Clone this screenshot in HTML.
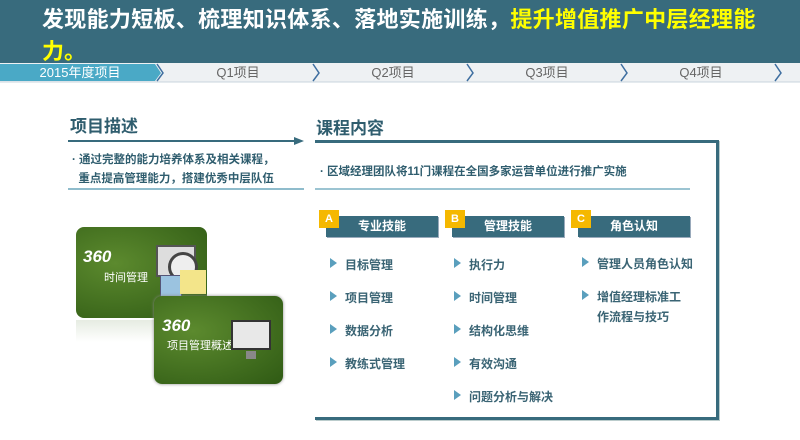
<!DOCTYPE html>
<html><head><meta charset="utf-8"><style>
*{margin:0;padding:0;box-sizing:border-box}
body{width:800px;height:440px;background:#fff;position:relative;overflow:hidden;font-family:"Liberation Sans","Noto Sans CJK SC",sans-serif}
.abs{position:absolute}
.hdr{left:0;top:0;width:800px;height:63px;background:#386b7d}
.t1{left:42px;top:2px;font-size:22px;font-weight:bold;color:#fff;white-space:nowrap;letter-spacing:0.3px}
.y{color:#ffff00}
.t2{left:42px;top:34px;font-size:22px;font-weight:bold;color:#ffff00}
.tl{top:63px;height:19px;font-size:13px;color:#666;text-align:center;line-height:19px}
.h{font-size:17px;font-weight:bold;color:#2f5d6e}
.bt{font-size:11.5px;font-weight:bold;color:#2f5d6e;line-height:19px;white-space:nowrap}
.bar{height:21px;background:#386b7d;color:#fff;font-size:12px;font-weight:bold;text-align:center;line-height:21px;width:112px;box-shadow:1px 1px 0 #9ab}
.badge{width:20px;height:18px;background:#f5b800;color:#fff;font-size:11px;font-weight:bold;text-align:center;line-height:18px}
.it{font-size:12px;font-weight:bold;color:#3a6474;white-space:nowrap;line-height:21px}
.tri:before{content:"";display:inline-block;width:0;height:0;border-left:7px solid #5a9fbd;border-top:5px solid transparent;border-bottom:5px solid transparent;margin-right:8px;vertical-align:1px}
.card{border-radius:8px;background:radial-gradient(ellipse at 30% 40%,#5c8a2e,#2f5a14);color:#fff;overflow:hidden}
.card .n{position:absolute;font-size:17px;font-weight:bold;font-style:italic}
.card .s{position:absolute;font-size:11px}
</style></head><body>
<div class="abs hdr"></div>
<div class="abs t1">发现能力短板、梳理知识体系、落地实施训练，<span class="y">提升增值推广中层经理能</span></div>
<div class="abs t2">力。</div>
<svg class="abs" style="left:0;top:63px" width="800" height="20">
<rect x="0" y="0" width="800" height="19" fill="#eef1f3"/>
<polygon points="0,1 155,1 161,10 155,18 0,18" fill="#4aa9c6"/>
<g fill="none" stroke="#3f6fa0" stroke-width="1.5">
<polyline points="157,1 163,10 157,18"/><polyline points="313,1 319,10 313,18"/><polyline points="467,1 473,10 467,18"/><polyline points="621,1 627,10 621,18"/><polyline points="775,1 781,10 775,18"/>
</g>
<line x1="0" y1="19" x2="800" y2="19" stroke="#c8d4dc"/>
</svg>
<div class="abs tl" style="left:0;width:160px;color:#fff">2015年度项目</div>
<div class="abs tl" style="left:160px;width:156px">Q1项目</div>
<div class="abs tl" style="left:316px;width:154px">Q2项目</div>
<div class="abs tl" style="left:470px;width:154px">Q3项目</div>
<div class="abs tl" style="left:624px;width:154px">Q4项目</div>

<div class="abs h" style="left:70px;top:112px">项目描述</div>
<svg class="abs" style="left:68px;top:136px" width="240" height="10"><line x1="0" y1="5" x2="228" y2="5" stroke="#386b7d" stroke-width="2"/><polygon points="226,1 236,5 226,9" fill="#386b7d"/></svg>
<div class="abs bt" style="left:72px;top:151px">· 通过完整的能力培养体系及相关课程，<br>&nbsp;&nbsp;重点提高管理能力，搭建优秀中层队伍</div>
<div class="abs" style="left:68px;top:188px;width:236px;height:2px;background:#8fbccc"></div>

<div class="abs card" style="left:76px;top:227px;width:131px;height:91px">
<div class="n" style="left:7px;top:20px">360</div><div class="s" style="left:28px;top:42px">时间管理</div>
<div class="abs" style="left:80px;top:18px;width:40px;height:32px;background:#ddd;border:2px solid #555"></div>
<div class="abs" style="left:92px;top:25px;width:30px;height:30px;border-radius:50%;background:#eee;border:3px solid #444"></div>
<div class="abs" style="left:84px;top:48px;width:22px;height:28px;background:#9bc3e0;border:1px solid #557"></div>
<div class="abs" style="left:104px;top:43px;width:26px;height:24px;background:#f3e58a"></div>
</div>
<div class="abs" style="left:76px;top:320px;width:131px;height:22px;background:linear-gradient(#e6ece2,#fff)"></div>
<div class="abs card" style="left:154px;top:296px;width:129px;height:88px;box-shadow:0 0 3px #888">
<div class="n" style="left:8px;top:20px">360</div><div class="s" style="left:13px;top:41px">项目管理概述</div>
<div class="abs" style="left:77px;top:24px;width:40px;height:30px;background:#e8e8e8;border:2px solid #333"></div>
<div class="abs" style="left:92px;top:55px;width:10px;height:8px;background:#888"></div>
</div>

<div class="abs h" style="left:316px;top:114px">课程内容</div>
<div class="abs" style="left:315px;top:140px;width:404px;height:280px;border-top:3px solid #386b7d;border-right:3px solid #386b7d;border-bottom:3px solid #386b7d;box-shadow:1px 1px 0 #bcc"></div>
<div class="abs bt" style="left:320px;top:163px">· 区域经理团队将11门课程在全国多家运营单位进行推广实施</div>
<div class="abs" style="left:315px;top:188px;width:375px;height:2px;background:#9cc4d2"></div>

<div class="abs bar" style="left:326px;top:216px">专业技能</div><div class="abs badge" style="left:319px;top:210px">A</div>
<div class="abs bar" style="left:452px;top:216px">管理技能</div><div class="abs badge" style="left:445px;top:210px">B</div>
<div class="abs bar" style="left:578px;top:216px">角色认知</div><div class="abs badge" style="left:571px;top:210px">C</div>

<div class="abs it tri" style="left:330px;top:255px">目标管理</div>
<div class="abs it tri" style="left:330px;top:288px">项目管理</div>
<div class="abs it tri" style="left:330px;top:321px">数据分析</div>
<div class="abs it tri" style="left:330px;top:354px">教练式管理</div>
<div class="abs it tri" style="left:454px;top:255px">执行力</div>
<div class="abs it tri" style="left:454px;top:288px">时间管理</div>
<div class="abs it tri" style="left:454px;top:321px">结构化思维</div>
<div class="abs it tri" style="left:454px;top:354px">有效沟通</div>
<div class="abs it tri" style="left:454px;top:387px">问题分析与解决</div>
<div class="abs it tri" style="left:582px;top:254px">管理人员角色认知</div>
<div class="abs it tri" style="left:582px;top:287px">增值经理标准工</div>
<div class="abs it" style="left:597px;top:307px">作流程与技巧</div>
</body></html>
